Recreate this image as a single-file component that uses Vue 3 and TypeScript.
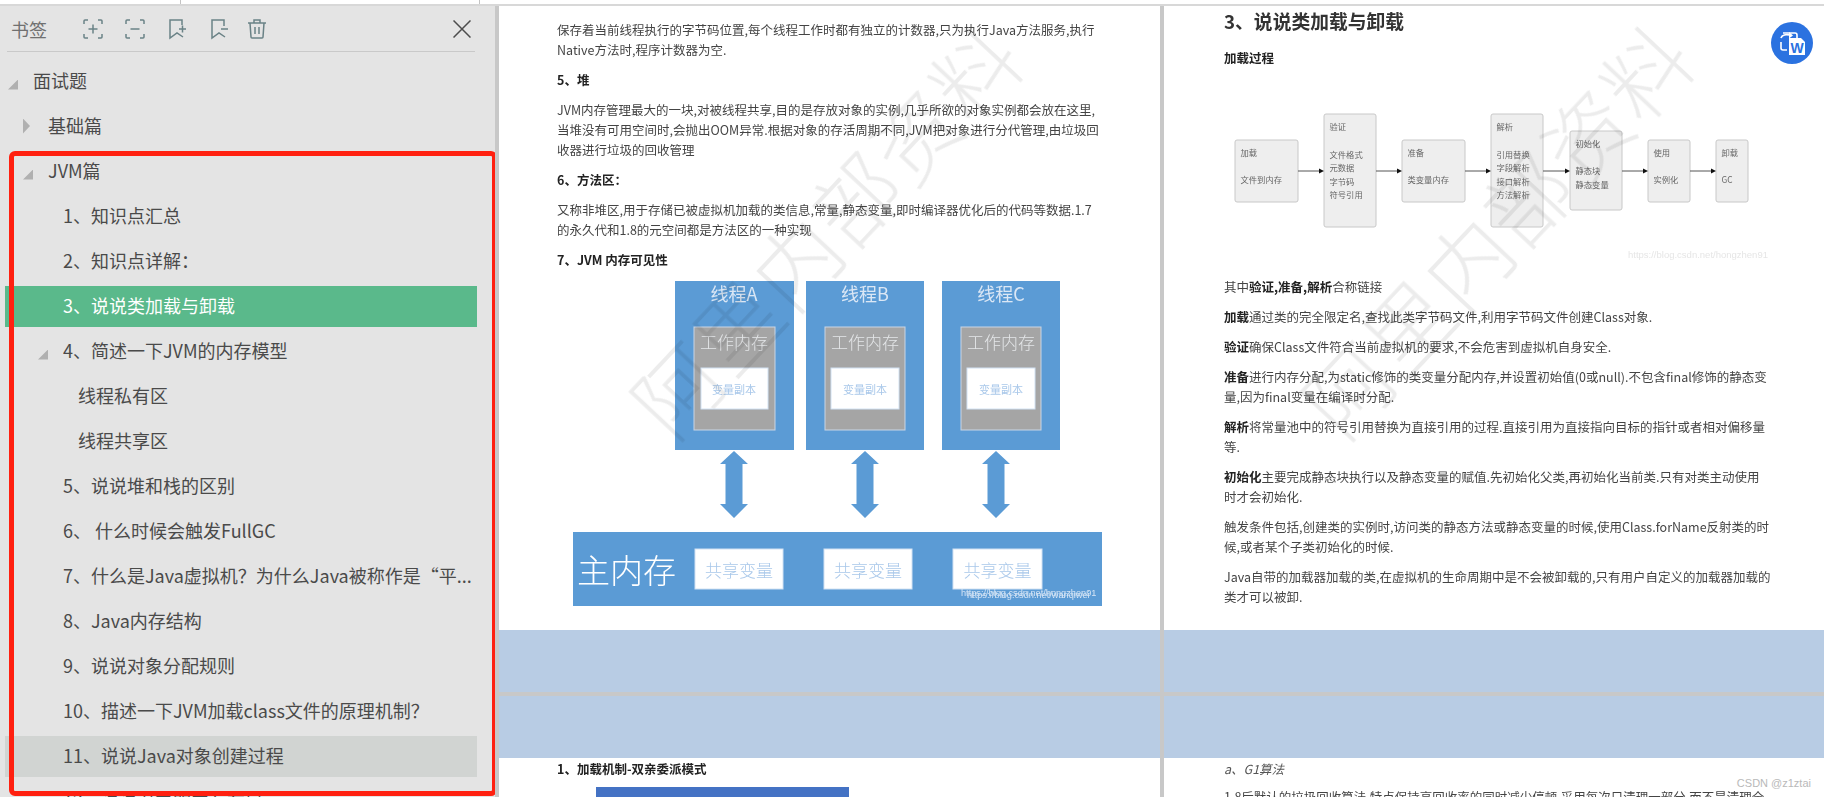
<script setup lang="ts">
interface Row { text: string; level: number; caret?: 'open' | 'closed'; state?: 'active' | 'hover' }
const rows: Row[] = [
  { text: '面试题', level: 0, caret: 'open' },
  { text: '基础篇', level: 1, caret: 'closed' },
  { text: 'JVM篇', level: 1, caret: 'open' },
  { text: '1、知识点汇总', level: 2 },
  { text: '2、知识点详解：', level: 2 },
  { text: '3、说说类加载与卸载', level: 2, state: 'active' },
  { text: '4、简述一下JVM的内存模型', level: 2, caret: 'open' },
  { text: '线程私有区', level: 3 },
  { text: '线程共享区', level: 3 },
  { text: '5、说说堆和栈的区别', level: 2 },
  { text: '6、 什么时候会触发FullGC', level: 2 },
  { text: '7、什么是Java虚拟机？为什么Java被称作是“平...', level: 2 },
  { text: '8、Java内存结构', level: 2 },
  { text: '9、说说对象分配规则', level: 2 },
  { text: '10、描述一下JVM加载class文件的原理机制？', level: 2 },
  { text: '11、说说Java对象创建过程', level: 2, state: 'hover' },
  { text: '12、说说对象的内存布局', level: 2 },
]

const threads = [
  { name: '线程A', x: 675, w: 119, cx: 734, gx: 694, gw: 81, wx: 701, ww: 67 },
  { name: '线程B', x: 806, w: 118, cx: 865, gx: 825, gw: 80, wx: 831, ww: 68 },
  { name: '线程C', x: 942, w: 118, cx: 1001, gx: 961, gw: 80, wx: 967, ww: 68 },
]
const arrowCenters = [734, 865, 996]
const arrowPoints = (c: number) =>
  `${c},452 ${c + 14},465 ${c + 8.5},465 ${c + 8.5},505 ${c + 14},505 ${c},519 ${c - 14},505 ${c - 8.5},505 ${c - 8.5},465 ${c - 14},465`
const shared = [
  { x: 695, w: 88 },
  { x: 824, w: 88 },
  { x: 953, w: 89 },
]

interface Line { t: string; y: number }
const flow: { x: number; y: number; w: number; h: number; lines: Line[] }[] = [
  { x: 1235, y: 140, w: 63, h: 62, lines: [{ t: '加载', y: 152 }, { t: '文件到内存', y: 179 }] },
  { x: 1324, y: 114, w: 52, h: 113, lines: [{ t: '验证', y: 126 }, { t: '文件格式', y: 154 }, { t: '元数据', y: 167 }, { t: '字节码', y: 181 }, { t: '符号引用', y: 194 }] },
  { x: 1402, y: 140, w: 63, h: 62, lines: [{ t: '准备', y: 152 }, { t: '类变量内存', y: 179 }] },
  { x: 1491, y: 114, w: 52, h: 113, lines: [{ t: '解析', y: 126 }, { t: '引用替换', y: 154 }, { t: '字段解析', y: 167 }, { t: '接口解析', y: 181 }, { t: '方法解析', y: 194 }] },
  { x: 1570, y: 131, w: 52, h: 79, lines: [{ t: '初始化', y: 143 }, { t: '静态块', y: 170 }, { t: '静态变量', y: 184 }] },
  { x: 1648, y: 140, w: 42, h: 62, lines: [{ t: '使用', y: 152 }, { t: '实例化', y: 179 }] },
  { x: 1716, y: 140, w: 32, h: 62, lines: [{ t: '卸载', y: 152 }, { t: 'GC', y: 179 }] },
]
const flowArrows = [
  [1298, 1324], [1376, 1402], [1465, 1491], [1543, 1570], [1622, 1648], [1690, 1716],
]
const watermark = '阿里内部资料'
</script>

<template>
  <div class="screen">
    <div class="top-strip">
      <i class="tick tick-a"></i>
      <i class="tick tick-b"></i>
    </div>
    <div class="main">
      <aside class="sidebar">
        <header class="side-head">
          <span class="side-title">书签</span>
          <div class="tools">
            <svg class="tool" viewBox="0 0 22 22"><path d="M2 6V3a1 1 0 0 1 1-1h3M16 2h3a1 1 0 0 1 1 1v3M20 16v3a1 1 0 0 1-1 1h-3M6 20H3a1 1 0 0 1-1-1v-3M6.5 11h9M11 6.500v9" /></svg>
            <svg class="tool" viewBox="0 0 22 22"><path d="M2 6V3a1 1 0 0 1 1-1h3M16 2h3a1 1 0 0 1 1 1v3M20 16v3a1 1 0 0 1-1 1h-3M6 20H3a1 1 0 0 1-1-1v-3M6.500 11h9" /></svg>
            <svg class="tool" viewBox="0 0 22 22"><path d="M16 7V2H4v18l7-5 6 4M13 11h7M16.500 7.500v7" /></svg>
            <svg class="tool" viewBox="0 0 22 22"><path d="M16 8V2H4v18l7-5 6 4M13 11h7" /></svg>
            <svg class="tool tool-trash" viewBox="0 0 22 22"><path d="M2 5h18M8 5V2h6v3M4 5l1 14a1 1 0 0 0 1 1h10a1 1 0 0 0 1-1l1-14M9 9v7M13 9v7" /></svg>
          </div>
          <svg class="close" viewBox="0 0 18 18"><path d="M0.500 0.500l17 17M17.500 0.500l-17 17" /></svg>
        </header>
        <ul class="tree">
          <li
            v-for="r in rows"
            :key="r.text"
            class="row"
            :class="[`level-${r.level}`, r.state]"
          >
            <i v-if="r.caret" class="caret" :class="r.caret"></i>
            <span class="label">{{ r.text }}</span>
          </li>
        </ul>
        <div class="annotation"></div>
      </aside>

      <section class="doc">
        <div class="spread spread-top">
          <article class="page page-left">
            <div class="body">
              <p>保存着当前线程执行的字节码位置,每个线程工作时都有独立的计数器,只为执行Java方法服务,执行<br />Native方法时,程序计数器为空.</p>
              <p class="h">5、堆</p>
              <p>JVM内存管理最大的一块,对被线程共享,目的是存放对象的实例,几乎所欲的对象实例都会放在这里,<br />当堆没有可用空间时,会抛出OOM异常.根据对象的存活周期不同,JVM把对象进行分代管理,由垃圾回<br />收器进行垃圾的回收管理</p>
              <p class="h">6、方法区：</p>
              <p>又称非堆区,用于存储已被虚拟机加载的类信息,常量,静态变量,即时编译器优化后的代码等数据.1.7<br />的永久代和1.8的元空间都是方法区的一种实现</p>
              <p class="h">7、JVM 内存可见性</p>
              <svg class="jmm" viewBox="557 281 545 330" width="545" height="330">
                <g v-for="t in threads" :key="t.name">
                  <rect :x="t.x" y="282" :width="t.w" height="169" class="blue" />
                  <text :x="t.cx" y="294" class="t-thread">{{ t.name }}</text>
                  <rect :x="t.gx" y="328" :width="t.gw" height="103" class="grey" />
                  <text :x="t.cx" y="342" class="t-work">工作内存</text>
                  <rect :x="t.wx" y="369" :width="t.ww" height="41" class="white" />
                  <text :x="t.cx" y="390" class="t-copy">变量副本</text>
                </g>
                <polygon v-for="c in arrowCenters" :key="c" :points="arrowPoints(c)" class="blue" />
                <rect x="573" y="533" width="529" height="74" class="blue" />
                <text x="577" y="570" class="t-main">主内存</text>
                <g v-for="s in shared" :key="s.x">
                  <rect :x="s.x" y="550" :width="s.w" height="40" class="white" />
                  <text :x="s.x + s.w / 2" y="570" class="t-shared">共享变量</text>
                </g>
                <text x="961" y="594" class="t-url">https://blog.csdn.net/hongzhen91</text>
                <text x="967" y="596" class="t-url">https://blog.csdn.net/wanqiwei</text>
              </svg>
            </div>
            <div class="mark"><span>{{ watermark }}</span></div>
          </article>

          <article class="page page-right">
            <div class="body">
              <p class="title">3、说说类加载与卸载</p>
              <p class="h">加载过程</p>
              <svg class="flow" viewBox="1224 100 545 177" width="545" height="177">
                <g v-for="b in flow" :key="b.x">
                  <rect :x="b.x" :y="b.y" :width="b.w" :height="b.h" rx="2" class="f-box" />
                  <text v-for="l in b.lines" :key="l.t" :x="b.x + 5.500" :y="l.y" class="f-text">{{ l.t }}</text>
                </g>
                <g v-for="a in flowArrows" :key="a[0]">
                  <line :x1="a[0]" y1="171" :x2="a[1] - 3" y2="171" class="f-line" />
                  <polygon :points="`${a[1]},171 ${a[1] - 5},168.500 ${a[1] - 5},173.500`" class="f-head" />
                </g>
                <text x="1628" y="254" class="f-url">https://blog.csdn.net/hongzhen91</text>
              </svg>
              <p>其中<b>验证,准备,解析</b>合称链接</p>
              <p><b>加载</b>通过类的完全限定名,查找此类字节码文件,利用字节码文件创建Class对象.</p>
              <p><b>验证</b>确保Class文件符合当前虚拟机的要求,不会危害到虚拟机自身安全.</p>
              <p><b>准备</b>进行内存分配,为static修饰的类变量分配内存,并设置初始值(0或null).不包含final修饰的静态变<br />量,因为final变量在编译时分配.</p>
              <p><b>解析</b>将常量池中的符号引用替换为直接引用的过程.直接引用为直接指向目标的指针或者相对偏移量<br />等.</p>
              <p><b>初始化</b>主要完成静态块执行以及静态变量的赋值.先初始化父类,再初始化当前类.只有对类主动使用<br />时才会初始化.</p>
              <p>触发条件包括,创建类的实例时,访问类的静态方法或静态变量的时候,使用Class.forName反射类的时<br />候,或者某个子类初始化的时候.</p>
              <p>Java自带的加载器加载的类,在虚拟机的生命周期中是不会被卸载的,只有用户自定义的加载器加载的<br />类才可以被卸.</p>
            </div>
            <div class="mark"><span>{{ watermark }}</span></div>
            <div class="badge">
              <svg viewBox="0 0 42 42" width="42" height="42">
                <circle cx="21" cy="21" r="21" fill="#2b72e0" />
                <path d="M12 11h12a2 2 0 0 1 2 2v3M10 20v6a2 2 0 0 0 2 2h4" fill="none" stroke="#fff" stroke-width="1.600" />
                <path d="M10 16c1-3 5-4 9-3" fill="none" stroke="#fff" stroke-width="1.800" />
                <path d="M18 10l4 3.500-4 3z" fill="#fff" />
                <path d="M18 16h12l4 4v13H18z" fill="#fff" />
                <text x="26" y="31" class="badge-w">W</text>
              </svg>
            </div>
          </article>
        </div>

        <div class="spread band"><div></div><div></div></div>
        <div class="spread band band-second"><div></div><div></div></div>

        <div class="spread spread-bottom">
          <article class="page page-left">
            <div class="body">
              <p class="h tail-head">1、加载机制-双亲委派模式</p>
              <div class="blue-figure"></div>
            </div>
          </article>
          <article class="page page-right">
            <div class="body">
              <p class="tail-head"><em>a、G1算法</em></p>
              <p>1.8后默认的垃圾回收算法,特点保持高回收率的同时减少停顿.采用每次只清理一部分,而不是清理全</p>
            </div>
            <span class="csdn">CSDN @z1ztai</span>
          </article>
        </div>
      </section>
    </div>
  </div>
</template>

<style scoped>
.screen {
  width: 1824px;
  height: 797px;
  overflow: hidden;
  display: flex;
  flex-direction: column;
  font-family: "Noto Sans CJK SC", "Noto Sans", sans-serif;
  color: #444;
  background: #fff;
}
.top-strip {
  flex: none;
  height: 4px;
  border-bottom: 2px solid #d8d8d8;
  position: relative;
}
.tick {
  position: absolute;
  top: 0;
  width: 1px;
  height: 4px;
  background: #c4c4c4;
}
.tick-a { left: 180px; }
.tick-b { left: 479px; }
.main {
  flex: 1;
  min-height: 0;
  display: flex;
}

/* sidebar */
.sidebar {
  flex: none;
  width: 499px;
  box-sizing: border-box;
  border-right: 4px solid #c8c8c8;
  background: #e4e4e4;
  position: relative;
  overflow: hidden;
}
.side-head {
  width: 468px;
  height: 46px;
  box-sizing: border-box;
  margin-left: 7px;
  padding: 0 4px;
  border-bottom: 1px solid #c9c9c9;
  display: flex;
  align-items: center;
}
.side-title {
  font-size: 18px;
  color: #707070;
  line-height: 1;
}
.tools {
  margin-left: 35px;
  display: flex;
  gap: 20px;
}
.tool {
  width: 22px;
  height: 22px;
  fill: none;
  stroke: #6a8286;
  stroke-width: 1.500;
}
.tool-trash { margin-left: -4px; }
.close {
  margin-left: auto;
  width: 18px;
  height: 18px;
  fill: none;
  stroke: #4c4c4c;
  stroke-width: 1.500;
}
.tree {
  list-style: none;
  margin: 0;
  padding: 9px 0 0 5px;
  width: 472px;
}
.row {
  height: 41px;
  margin-bottom: 4px;
  box-sizing: border-box;
  padding-right: 6px;
  padding-bottom: 3px;
  display: flex;
  align-items: center;
  font-size: 18px;
  color: #4a4a4a;
}
.label {
  white-space: nowrap;
  overflow: hidden;
}
.level-0 { padding-left: 28px; }
.level-1 { padding-left: 43px; }
.level-2 { padding-left: 58px; }
.level-3 { padding-left: 73px; }
.row.active {
  background: #5ab98b;
  color: #fff;
}
.row.hover { background: #d1d4d2; }
.caret {
  flex: none;
  margin-left: -25px;
  background: #b0b0b0;
}
.caret.open {
  width: 10px;
  height: 10px;
  margin-right: 15px;
  margin-top: 9px;
  clip-path: polygon(100% 0, 100% 100%, 0 100%);
}
.caret.closed {
  width: 7px;
  height: 15px;
  margin-right: 18px;
  margin-top: 2px;
  clip-path: polygon(0 0, 100% 50%, 0 100%);
}
.annotation {
  position: absolute;
  left: 9px;
  top: 145px;
  width: 488px;
  height: 645px;
  box-sizing: border-box;
  border: 5px solid #ff2010;
  border-radius: 6px;
  pointer-events: none;
}

/* document */
.doc {
  flex: 1;
  min-width: 0;
  background: #c8c8c8;
  display: flex;
  flex-direction: column;
}
.spread {
  display: grid;
  grid-template-columns: 661px 660px;
  column-gap: 4px;
}
.spread-top { height: 624px; flex: none; }
.band { height: 62px; flex: none; }
.band > div { background: #b8cce4; }
.band-second { margin-top: 4px; }
.spread-bottom { flex: 1; min-height: 0; overflow: hidden; }
.page {
  background: #fff;
  position: relative;
  overflow: hidden;
}
.body {
  filter: blur(0.4px);
  white-space: nowrap;
  font-size: 12.500px;
  line-height: 20px;
  color: #444;
}
.page-left .body { padding-left: 58px; }
.page-right .body { padding-left: 60px; }
.spread-top .page-left .body { padding-top: 14px; }
.spread-top .page-right .body { padding-top: 0; }
.body p { margin: 0 0 10px; }
.body b, .h { font-weight: 700; color: #222; }
.title {
  font-size: 18.800px;
  line-height: 30px;
  font-weight: 700;
  color: #333;
}
.body .title { margin-bottom: 12px; }
.jmm, .flow { display: block; }
.jmm { margin-top: 10px; }
.flow { margin-top: 32px; }
.jmm text { text-anchor: middle; dominant-baseline: central; }
.blue { fill: #5b9bd5; }
.grey { fill: #a5a5a5; stroke: #c9d6e6; stroke-width: 1; }
.white { fill: #fff; stroke: #d2e2f3; stroke-width: 1; }
.t-thread { font-size: 18px; fill: #dbe7f5; }
.t-work { font-size: 17px; fill: #e4e6e8; font-weight: 300; }
.t-copy { font-size: 11px; fill: #a9c8ea; }
.t-shared { font-size: 17px; fill: #a9c8ea; font-weight: 300; }
.jmm .t-main { font-size: 33px; fill: #fff; text-anchor: start; font-weight: 300; }
.jmm .t-url { font-size: 9.200px; fill: #d4e4f5; text-anchor: start; font-family: "Liberation Sans", sans-serif; }
.f-box { fill: #eeeeee; stroke: #c8c8c8; stroke-width: 1; }
.f-text { font-size: 8.300px; fill: #666; dominant-baseline: central; }
.f-line { stroke: #555; stroke-width: 1; }
.f-head { fill: #111; }
.f-url { font-size: 9.500px; fill: #e6e6e6; dominant-baseline: central; font-family: "Liberation Sans", sans-serif; }
.mark {
  position: absolute;
  left: 325px;
  top: 221px;
  width: 0;
  height: 0;
  display: flex;
  align-items: center;
  justify-content: center;
  pointer-events: none;
}
.mark span {
  flex: none;
  font-size: 85px;
  line-height: 1;
  letter-spacing: 2px;
  font-weight: 300;
  color: rgba(0, 0, 0, 0.075);
  white-space: nowrap;
  transform: rotate(-46.800deg);
  filter: blur(0.6px);
}
.page-right .mark { left: 331px; }
.badge {
  position: absolute;
  left: 607px;
  top: 16px;
  width: 42px;
  height: 42px;
}
.badge-w {
  font-size: 14px;
  font-weight: 700;
  fill: #2b72e0;
  text-anchor: middle;
  font-family: "Liberation Sans", sans-serif;
}
.tail-head { padding-top: 1px; }
.body .tail-head { margin-bottom: 8px; }
.body em { color: #555; }
.blue-figure {
  width: 253px;
  height: 40px;
  margin-left: 39px;
  margin-top: 1px;
  background: #4472c4;
}
.csdn {
  position: absolute;
  right: 13px;
  top: 18px;
  font-size: 11px;
  line-height: 14px;
  color: #b9b9b9;
  font-family: "Liberation Sans", sans-serif;
}
</style>

<style>
html, body { margin: 0; background: #fff; }
</style>
